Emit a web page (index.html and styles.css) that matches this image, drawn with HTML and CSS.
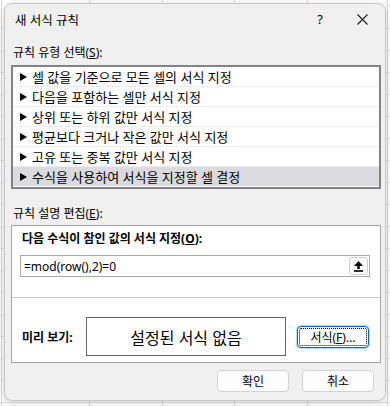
FILE: index.html
```html
<!DOCTYPE html>
<html lang="ko">
<head>
    <meta charset="UTF-8">
    <meta name="viewport" content="width=device-width, initial-scale=1.0">
    <title>새 서식 규칙</title>
    <link rel="stylesheet" href="styles.css">
</head>
<body>
    <div class="dialog">
        <div class="titlebar">
            <span class="title">새 서식 규칙</span>
            <span class="help">?</span>
            <span class="close">
                <svg width="11" height="11" viewBox="0 0 11 11">
                    <path d="M0.5 0.5 L10.5 10.5 M10.5 0.5 L0.5 10.5" stroke="#1a1a1a" stroke-width="1.1" fill="none"/>
                </svg>
            </span>
        </div>

        <div class="content">
            <div class="label">규칙 유형 선택(<u>S</u>):</div>
            <ul class="rule-list">
                <li><span class="arrow"></span>셀 값을 기준으로 모든 셀의 서식 지정</li>
                <li><span class="arrow"></span>다음을 포함하는 셀만 서식 지정</li>
                <li><span class="arrow"></span>상위 또는 하위 값만 서식 지정</li>
                <li><span class="arrow"></span>평균보다 크거나 작은 값만 서식 지정</li>
                <li><span class="arrow"></span>고유 또는 중복 값만 서식 지정</li>
                <li class="selected"><span class="arrow"></span>수식을 사용하여 서식을 지정할 셀 결정</li>
            </ul>

            <div class="label label-edit">규칙 설명 편집(<u>E</u>):</div>
            <div class="panel">
                <div class="panel-top">
                    <div class="panel-title">다음 수식이 참인 값의 서식 지정(<u>O</u>):</div>
                    <div class="formula">
                        <span class="formula-text">=mod(row(),2)=0</span>
                        <button class="collapse-btn">
                            <svg width="9" height="11" viewBox="0 0 9 11">
                                <polygon points="4.5,0 9,5 0,5" fill="#000"/>
                                <rect x="3.25" y="4.5" width="2.5" height="3.5" fill="#000"/>
                                <rect x="0" y="9.2" width="9" height="1.6" fill="#000"/>
                            </svg>
                        </button>
                    </div>
                </div>
                <div class="panel-bottom">
                    <span class="preview-label">미리 보기:</span>
                    <div class="preview-box">설정된 서식 없음</div>
                    <button class="format-btn">서식(<u>F</u>)...</button>
                </div>
            </div>

            <div class="actions">
                <button class="btn">확인</button>
                <button class="btn">취소</button>
            </div>
        </div>
    </div>
</body>
</html>
```

FILE: styles.css
```css
* {
    margin: 0;
    padding: 0;
    box-sizing: border-box;
}

body {
    width: 390px;
    height: 406px;
    overflow: hidden;
    padding: 3px 0 0 4px;
    font-family: "Noto Sans", "Noto Sans CJK KR", sans-serif;
    font-size: 12px;
    color: #000;
    background-color: #fff;
    /* spreadsheet grid behind the dialog */
    background-image:
        linear-gradient(#dadada, #dadada),
        linear-gradient(#dadada, #dadada),
        linear-gradient(#dadada, #dadada),
        linear-gradient(#dadada, #dadada),
        linear-gradient(#dadada, #dadada),
        linear-gradient(#dadada, #dadada),
        repeating-linear-gradient(to bottom, transparent 0, transparent 21px, #e2e2e2 21px, #e2e2e2 22px);
    background-size: 1px 100%, 1px 100%, 1px 100%, 1px 100%, 1px 100%, 1px 100%, 100% 100%;
    background-position: 1px 0, 89px 0, 162px 0, 234px 0, 307px 0, 387px 0, 0 7px;
    background-repeat: no-repeat;
}

.dialog {
    width: 382px;
    height: 398px;
    background: #f0f0f0;
    border: 1px solid #c6c6c6;
    border-radius: 8px;
    box-shadow: 0 2px 8px rgba(0, 0, 0, 0.18);
}

.titlebar {
    display: flex;
    align-items: center;
    height: 30px;
    padding-left: 10px;
}

.title {
    flex: 1;
    font-size: 12.5px;
}

.help {
    width: 38px;
    text-align: center;
    font-size: 13px;
}

.close {
    width: 46px;
    display: flex;
    justify-content: center;
    align-items: center;
}

.content {
    padding: 0 4px 0 6px;
}

.label {
    margin-top: 11px;
    padding-left: 2px;
    line-height: 16px;
}

.label-edit {
    margin-top: 17px;
    margin-bottom: 3px;
}

.rule-list {
    list-style: none;
    margin-top: 4px;
    background: #fff;
    border: 2px solid #838383;
    padding-bottom: 1px;
}

.rule-list li {
    display: flex;
    align-items: center;
    height: 20px;
    padding-left: 7px;
    font-size: 13px;
    border-bottom: 1px solid #ececec;
}

.rule-list li.selected {
    background: #dadadf;
    border-bottom: none;
    height: 19px;
}

.arrow {
    width: 0;
    height: 0;
    border-left: 7px solid #000;
    border-top: 4px solid transparent;
    border-bottom: 4px solid transparent;
    margin-right: 5px;
}

.panel {
    background: #fff;
    border: 1px solid #a3a3a3;
}

.panel-top {
    padding: 5px 10px 20px 8px;
    border-bottom: 1px solid #c8c8c8;
}

.panel-title {
    padding-left: 2px;
    line-height: 16px;
    font-weight: bold;
}

.formula {
    display: flex;
    align-items: center;
    height: 22px;
    margin-top: 8px;
    padding-left: 3px;
    border: 1px solid #aaaaaa;
}

.formula-text {
    flex: 1;
}

.collapse-btn {
    width: 19px;
    height: 18px;
    margin-right: 1px;
    display: flex;
    align-items: center;
    justify-content: center;
    background: #fbfbfb;
    border: 1px solid #d0d0d0;
    border-radius: 3px;
}

.panel-bottom {
    display: flex;
    align-items: center;
    height: 39px;
    margin: 19px 0 6px;
    padding-left: 10px;
}

.preview-label {
    width: 64px;
    font-weight: bold;
}

.preview-box {
    width: 200px;
    height: 39px;
    display: flex;
    align-items: center;
    justify-content: center;
    border: 1px solid #646464;
    font-size: 16px;
}

.format-btn {
    width: 72px;
    height: 22px;
    margin-left: 11px;
    font-family: inherit;
    font-size: 12px;
    background: #fdfdfd;
    border: 1px solid #0067c0;
    border-radius: 4px;
    box-shadow: 0 0 0 1px rgba(0, 103, 192, 0.25);
    outline: 1px dotted #000;
    outline-offset: -3px;
}

.actions {
    display: flex;
    justify-content: flex-end;
    gap: 13px;
    margin-top: 7px;
    padding-right: 7px;
}

.btn {
    width: 72px;
    height: 22px;
    font-family: inherit;
    font-size: 12px;
    color: #000;
    background: #fdfdfd;
    border: 1px solid #d3d3d3;
    border-radius: 4px;
}
```
